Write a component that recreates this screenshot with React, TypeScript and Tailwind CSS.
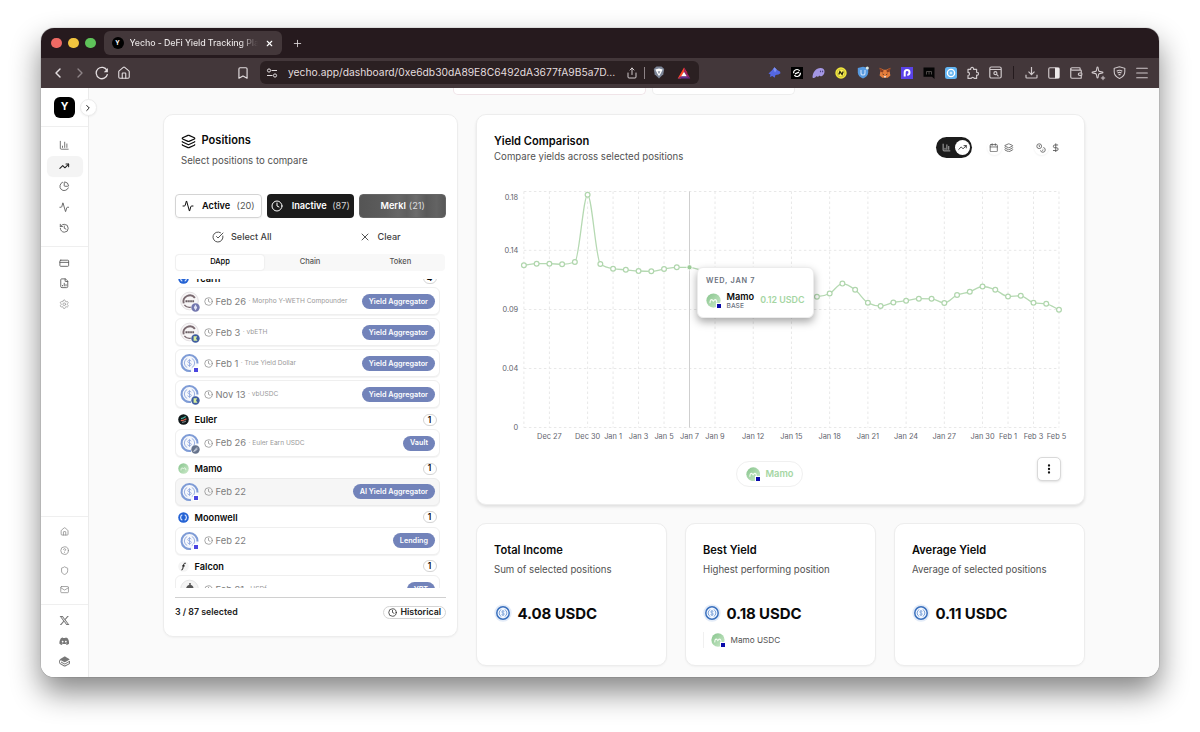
import type { ReactNode } from "react";
import {
  Activity,
  Bookmark,
  Calendar,
  ChartColumn,
  ChartPie,
  ChevronLeft,
  ChevronRight,
  CircleCheckBig,
  CircleQuestionMark,
  Clock,
  CreditCard,
  DollarSign,
  EllipsisVertical,
  FileChartColumn,
  History,
  House,
  Layers,
  Mail,
  Menu,
  PanelRight,
  Plus,
  Settings,
  Share,
  Shield,
  Sparkle,
  TrendingUp,
  Wallet,
  X,
} from "lucide-react";
import { FaDiscord, FaXTwitter } from "react-icons/fa6";
import { SiGitbook } from "react-icons/si";

/* ---------- token and protocol icons ---------- */

function UsdcRing({ size = 20 }: { size?: number }) {
  return (
    <svg width={size} height={size} viewBox="0 0 20 20" fill="none">
      <circle cx="10" cy="10" r="9.4" fill="#f6f8fc" />
      <path d="M11.5 18.3A8.4 8.4 0 1 1 18.4 10.5" stroke="#7f9cd6" strokeWidth="2.2" />
      <path
        d="M7.6 5.2a5.3 5.3 0 0 0 0 9.6M12.4 5.2a5.3 5.3 0 0 1 0 9.6"
        stroke="#94abdf"
        strokeWidth="1"
      />
      <path
        d="M11.8 8.2c-.2-.8-.9-1.1-1.8-1.1-1 0-1.8.5-1.8 1.4 0 2 3.7 1 3.7 3 0 .9-.8 1.4-1.9 1.4s-1.8-.5-2-1.3M10 6v8"
        stroke="#8fa7de"
        strokeWidth="0.9"
      />
    </svg>
  );
}

function UsdcCoin() {
  return (
    <svg width="18" height="18" viewBox="0 0 18 18" fill="none">
      <circle cx="9" cy="9" r="8.7" fill="#e4ecf8" />
      <circle cx="9" cy="9" r="6.2" fill="#f4f8ff" stroke="#3a70bd" strokeWidth="1.5" />
      <path
        d="M7.3 5.5a3.9 3.9 0 0 0 0 7M10.7 5.5a3.9 3.9 0 0 1 0 7"
        stroke="#6f98d4"
        strokeWidth="0.9"
      />
      <path
        d="M10.3 7.7c-.2-.6-.7-.8-1.3-.8-.8 0-1.3.4-1.3 1 0 1.5 2.7.7 2.7 2.2 0 .6-.6 1-1.4 1s-1.3-.3-1.4-.9M9 6v6"
        stroke="#6f98d4"
        strokeWidth="0.7"
      />
    </svg>
  );
}

function WethRing() {
  return (
    <svg width="20" height="20" viewBox="0 0 20 20" fill="none">
      <circle cx="10" cy="10" r="9.3" fill="#f7f5f6" stroke="#d6d2d4" strokeWidth="0.7" />
      <path d="M3.9 12.5a6.7 6.7 0 0 1 11.8-5.8" stroke="#7a6a70" strokeWidth="2" />
      <path d="M4.6 14a6.7 6.7 0 0 0 6.8 2.5" stroke="#7a6a70" strokeWidth="1.4" />
      <path d="M5.8 10.3h9" stroke="#5d5055" strokeWidth="2" strokeDasharray="1.5 0.5" />
    </svg>
  );
}

function MamoFace({ size = 15 }: { size?: number }) {
  return (
    <svg width={size} height={size} viewBox="0 0 16 16" fill="none">
      <defs>
        <linearGradient id="mamo" x1="0" y1="0" x2="1" y2="1">
          <stop offset="0" stopColor="#86c48c" />
          <stop offset="1" stopColor="#cdeacb" />
        </linearGradient>
      </defs>
      <circle cx="8" cy="8" r="7.6" fill="url(#mamo)" />
      <path
        d="M4.3 10.3c.1-2.4.8-3.3 1.6-3.3s1.3.9 1.9 1.7c.6-.8 1.100-1.700 2-1.700s1.500 1 1.600 2.800"
        stroke="#f4fbf3"
        strokeWidth="1.2"
        strokeLinecap="round"
      />
    </svg>
  );
}

function MamoBase({ size = 15 }: { size?: number }) {
  return (
    <span className="relative flex shrink-0">
      <MamoFace size={size} />
      <span className="absolute -right-[1px] -bottom-[1px] size-[6px] border border-white bg-[#0a0aaa]" />
    </span>
  );
}

function ProtocolIcon({ name }: { name: string }) {
  if (name === "Mamo") return <MamoFace size={11} />;
  if (name === "Euler")
    return (
      <svg width="11" height="11" viewBox="0 0 11 11" fill="none">
        <circle cx="5.5" cy="5.5" r="5.3" fill="#10181a" />
        <path d="M3 4.7c1.5-.2 3.5-1.3 4.7-2.2" stroke="#4fb7a3" strokeWidth="1.2" />
        <path d="M2.8 6.7c2 0 4-.9 5.6-2" stroke="#e2644f" strokeWidth="1.2" />
        <path d="M4 8.3c1.5 0 3-.6 4-1.3" stroke="#9ba7aa" strokeWidth="0.9" />
      </svg>
    );
  if (name === "Falcon")
    return (
      <svg width="11" height="11" viewBox="0 0 11 11" fill="none">
        <circle cx="5.5" cy="5.5" r="5.3" fill="#f4f4f4" />
        <path
          d="M7.8 2.3c-1.4-.5-1.9.3-2.2 1.7L4.7 8c-.2.8-.6 1-1.3.9M4 4.9h2.9"
          stroke="#222"
          strokeWidth="1"
        />
      </svg>
    );
  return (
    <svg width="11" height="11" viewBox="0 0 11 11" fill="none">
      <circle cx="5.5" cy="5.5" r="5.3" fill="#2563d4" />
      <path
        d="M4.3 2.8a3 3 0 0 0 0 5.4M6.7 2.8a3 3 0 0 1 0 5.4"
        stroke="#dbe8ff"
        strokeWidth="1.2"
      />
    </svg>
  );
}

type Chain = "base" | "eth" | "katana" | "euler" | "none";

function ChainBadge({ chain }: { chain: Chain }) {
  if (chain === "none") return null;
  if (chain === "base")
    return (
      <span className="absolute right-0 bottom-0 size-[6px] border-[0.5px] border-white bg-[#4a45e0]" />
    );
  return (
    <svg
      className="absolute -right-[1px] -bottom-[1px]"
      width="9"
      height="9"
      viewBox="0 0 9 9"
      fill="none"
    >
      <circle
        cx="4.5"
        cy="4.5"
        r="4.2"
        fill={chain === "eth" ? "#7377ae" : chain === "katana" ? "#3f5da0" : "#66738c"}
      />
      {chain === "eth" && <path d="m4.5 1.5 1.7 2.9L4.5 7.500 2.800 4.400Z" fill="#e1e3f7" />}
      {chain === "katana" && <path d="M2.6 2.2h3.600L5 4.500l1.500 2.300H2.600Z" fill="#d7ee9a" />}
      {chain === "euler" && <path d="m2.5 6.5 3.500-4M3.600 6.700l3-3" stroke="#d5dbe6" />}
    </svg>
  );
}

/* ---------- browser chrome ---------- */

function Slot({ children }: { children: ReactNode }) {
  return <span className="flex w-[22.1px] shrink-0 items-center justify-center">{children}</span>;
}

function Extensions() {
  return (
    <div className="flex items-center text-[#cfc8ca]">
      <Slot>
        <svg width="13" height="13" viewBox="0 0 13 13">
          <path
            d="M.5 7.5 4 4.3 6.5 1.2l2.3 2.5L12 5.5l.5 1.8-2 1.2-3 .4-.8 2.8L4.300 10l-2.500 1 .7-2.500Z"
            fill="#5467e2"
          />
          <path d="M6.5 1.2 8.800 3.700 7 6.500 5.300 3Z" fill="#7d90f0" />
        </svg>
      </Slot>
      <Slot>
        <svg width="12" height="12" viewBox="0 0 12 12" fill="none">
          <rect width="12" height="12" fill="#000" />
          <path
            d="M2.6 6.2A3.4 3.4 0 0 1 8.7 3.9M9.4 5.8A3.4 3.4 0 0 1 3.3 8.1"
            stroke="#fff"
            strokeWidth="1.2"
          />
          <path d="M4 6.9 8 5.1" stroke="#fff" strokeWidth="1.2" />
        </svg>
      </Slot>
      <Slot>
        <svg width="13" height="12" viewBox="0 0 13 12">
          <path
            d="M.5 10C.8 5 4 1 8.5 1c2.7 0 4 1.5 4 3.5 0 2.7-2 4.8-3.8 4.8-.7 0-1-.3-1.2-.8-.6.8-1.3 1.3-2 1.3-.6 0-.9-.3-1-.8C3.7 10.3 2.6 11 1.7 11 1 11 .5 10.7.5 10Z"
            fill="#a497e4"
          />
          <ellipse cx="8.5" cy="4.4" rx=".6" ry=".9" fill="#4b4185" />
          <ellipse cx="10.6" cy="4.4" rx=".6" ry=".9" fill="#4b4185" />
        </svg>
      </Slot>
      <Slot>
        <svg width="12" height="12" viewBox="0 0 12 12" fill="none">
          <circle cx="6" cy="6" r="5.7" fill="#f2e83b" />
          <circle cx="6" cy="6" r="3.9" fill="#fff35b" stroke="#9c9428" strokeWidth=".5" />
          <path d="M3.8 7.5 4.9 4.5l2.2 3 1.1-3" stroke="#26240c" strokeWidth="1.3" />
        </svg>
      </Slot>
      <Slot>
        <svg width="12" height="13" viewBox="0 0 12 13" fill="none">
          <path d="M.8 2 6 .8 11.2 2v4.5c0 3-2.5 4.9-5.2 6C3.3 11.4.8 9.5.8 6.5Z" fill="#579ae0" />
          <path d="M4 4v3a2 2 0 0 0 4 0V4" stroke="#c3dcf8" strokeWidth="1.2" />
          <circle cx="10.3" cy="2" r="1.5" fill="#dceae1" />
        </svg>
      </Slot>
      <Slot>
        <svg width="12" height="12" viewBox="0 0 12 12">
          <path
            d="m.6.7 4 2.1h2.8l4-2.1-.7 4 .7 3.8-2.7 2.3H3.3L.6 8.5l.7-3.8Z"
            fill="#e57e3c"
          />
          <path d="m.6.7 4 2.8-.6 2L1.3 4.7ZM11.4.7l-4 2.8.6 2 2.7-.8Z" fill="#8a3f22" />
          <path d="M3.3 6.5 5 7.3l-.8.7ZM8.7 6.5 7 7.3l.8.7Z" fill="#2d2320" />
          <path d="M4.8 9h2.4l-.3 1.5H5.1Z" fill="#e8dbd2" />
        </svg>
      </Slot>
      <Slot>
        <svg width="12" height="12" viewBox="0 0 12 12" fill="none">
          <rect width="12" height="12" fill="#5a43e8" />
          <path d="M3.7 9.6V5.5a2.4 2.4 0 1 1 2.6 2.4" stroke="#fff" strokeWidth="2" />
        </svg>
      </Slot>
      <Slot>
        <svg width="12" height="12" viewBox="0 0 12 12" fill="none">
          <path d="M.5.5h11V12L9 9.8H.5Z" fill="#050505" />
          <path d="M3.5 7.5v-3h5v3M6 4.5v3" stroke="#55504f" strokeWidth=".9" />
        </svg>
      </Slot>
      <Slot>
        <svg width="12" height="12" viewBox="0 0 12 12" fill="none">
          <rect width="12" height="12" rx="2.5" fill="#63b5f2" />
          <circle cx="6" cy="6" r="3.6" stroke="#fff" strokeWidth="1.4" />
          <path d="M6 4.6v2.8M4.6 6h2.8" stroke="#fff" strokeWidth=".9" />
        </svg>
      </Slot>
      <Slot>
        <svg
          width="14"
          height="14"
          viewBox="0 0 14 14"
          fill="none"
          stroke="currentColor"
          strokeWidth="1.2"
        >
          <path
            d="M2 3.3h2.7a1.5 1.5 0 1 1 2.9 0h3V6.3a1.5 1.5 0 1 1 0 2.9v3.2H8.2a1.5 1.5 0 0 0-2.9 0H2V9.5a1.5 1.5 0 0 0 0-3.1Z"
            strokeLinejoin="round"
          />
        </svg>
      </Slot>
      <Slot>
        <svg
          width="13"
          height="13"
          viewBox="0 0 13 13"
          fill="none"
          stroke="currentColor"
          strokeWidth="1.2"
        >
          <rect x=".8" y="1" width="11.4" height="11" rx="1.5" />
          <path d="M1 3.5h11M7.6 8.4l1.9 1.9" />
          <circle cx="6.4" cy="7.2" r="1.5" />
        </svg>
      </Slot>
      <span className="mx-[6.5px] h-[13px] w-px bg-[#241a1d]" />
      <Slot>
        <svg
          width="13"
          height="13"
          viewBox="0 0 13 13"
          fill="none"
          stroke="currentColor"
          strokeWidth="1.2"
        >
          <path d="M6.5 1v7.5M3.5 5.7l3 3 3-3M1 8.8v2.4c0 .5.3.8.8.8h9.4c.5 0 .8-.3.8-.8V8.8" />
        </svg>
      </Slot>
      <Slot>
        <span className="relative flex">
          <PanelRight size={14} strokeWidth={2} />
          <span className="absolute top-[2px] right-[1.5px] h-[10px] w-[4px] bg-[#eeeaea]" />
        </span>
      </Slot>
      <Slot>
        <Wallet size={14} strokeWidth={2} />
      </Slot>
      <Slot>
        <span className="relative flex">
          <Sparkle size={13} strokeWidth={2} />
          <Plus className="absolute -right-[2px] -bottom-[2px]" size={6} strokeWidth={4} />
        </span>
      </Slot>
      <Slot>
        <svg
          width="13"
          height="13"
          viewBox="0 0 13 13"
          fill="none"
          stroke="currentColor"
          strokeWidth="1.1"
        >
          <path d="M6.5.7 1.2 2.3v3.5c0 3.3 2.500 5.500 5.300 6.600 2.800-1.100 5.300-3.300 5.300-6.600V2.300Z" />
          <path d="M3.7 5.2c1.7-1.1 3.9-1.1 5.6 0M4.5 7c1.2-.8 2.8-.8 4 0M5.5 8.600h2" />
        </svg>
      </Slot>
      <Slot>
        <Menu size={16} strokeWidth={1.6} />
      </Slot>
    </div>
  );
}

function BrowserBar() {
  return (
    <header className="shrink-0 bg-[#261a1e] text-[#e3dddf]">
      <div className="flex h-[30px] items-center pl-[10px]">
        <div className="flex gap-[6.4px]">
          <span className="size-[10.6px] rounded-full bg-[#ee6a64]" />
          <span className="size-[10.6px] rounded-full bg-[#f1c43f]" />
          <span className="size-[10.6px] rounded-full bg-[#5fc35a]" />
        </div>
        <div className="ml-[8px] flex h-[24px] w-[178.5px] items-center rounded-[6px] bg-[#43373a] px-[8px]">
          <span className="flex size-[12px] shrink-0 items-center justify-center rounded-full bg-black text-[6px] font-bold text-white">
            Y
          </span>
          <span className="ml-[6px] h-[12px] w-[128px] overflow-hidden bg-gradient-to-r from-[#f2eeee] from-86% to-[#43373a] bg-clip-text text-[8.9px] leading-[12px] font-medium tracking-[-0.1px] whitespace-nowrap text-transparent">
            Yecho - DeFi Yield Tracking Platform
          </span>
          <X className="ml-auto text-white" size={9} strokeWidth={3} />
        </div>
        <Plus className="ml-[10px]" size={11} strokeWidth={1.8} />
      </div>

      <div className="flex h-[30px] items-center bg-[#43373a] pr-[6px] pb-px pl-[9px]">
        <ChevronLeft size={16} strokeWidth={2.2} />
        <ChevronRight className="ml-[6px] text-[#8f8588]" size={16} strokeWidth={2} />
        <svg className="ml-[7px]" width="14" height="14" viewBox="0 0 14 14" fill="none">
          <path d="M12 4.4A5.7 5.7 0 1 0 12.5 8.2" stroke="currentColor" strokeWidth="1.3" />
          <path d="M12.9 2v4.2H8.8Z" fill="currentColor" />
        </svg>
        <House className="ml-[8px]" size={14} strokeWidth={1.9} />
        <Bookmark className="ml-[105px]" size={14} strokeWidth={2} />
        <div className="ml-[10px] flex h-[23px] w-[438.500px] items-center rounded-[6px] bg-[#2b2022] pr-[8px] pl-[6px]">
          <svg
            width="12"
            height="12"
            viewBox="0 0 12 12"
            fill="none"
            stroke="currentColor"
            strokeWidth="1"
          >
            <circle cx="3" cy="3.5" r="1.6" />
            <path d="M5.5 3.5H11M1 8.5h5.5" />
            <circle cx="9" cy="8.5" r="1.6" />
          </svg>
          <span className="ml-[10px] w-[330px] text-[10.29px] whitespace-nowrap">
            yecho.app/dashboard/0xe6db30dA89E8C6492dA3677fA9B5a7D...
          </span>
          <span className="ml-auto flex items-center">
            <Share size={12} strokeWidth={1.8} />
            <span className="ml-[6px] h-[12px] w-px bg-[#8d8386]" />
            <svg className="ml-[8px]" width="12" height="13" viewBox="0 0 12 13">
              <path d="M3.5.6h5L11.2 3l-.9 5.3L6 12.4 1.7 8.3.8 3Z" fill="#7c8597" />
              <path d="m2.3 3.6 3.7-1 3.7 1-2 4L6 10 4.3 7.6Z" fill="#fff" />
              <path d="m4.6 5 1.400.6L7.400 5 6 8.300Z" fill="#7c8597" />
            </svg>
            <svg className="ml-[12px]" width="14" height="12" viewBox="0 0 14 12">
              <path d="M7 .6 10.5 6 7 4.8 4 11.5H.7Z" fill="#ff4724" />
              <path d="M7 .6 13.3 11.5 9.8 9.3 7 4.8Z" fill="#9e1f63" />
              <path d="M.7 11.5 4.2 9.3h5.6l3.5 2.2Z" fill="#662d91" />
              <path d="M7 4.8 9.8 9.3H4.2Z" fill="#fff" />
            </svg>
          </span>
        </div>
        <div className="ml-auto">
          <Extensions />
        </div>
      </div>
    </header>
  );
}

/* ---------- app sidebar ---------- */

function NavItem({ children, active }: { children: ReactNode; active?: boolean }) {
  return (
    <a
      className={
        active
          ? "flex h-[20.7px] w-[36px] items-center justify-center rounded-[6px] bg-[#f4f4f4] text-[#222] shadow-[0_1px_1px_rgba(0,0,0,0.05)]"
          : "flex h-[20.7px] w-[36px] items-center justify-center text-[#5a5a5a]"
      }
    >
      {children}
    </a>
  );
}

function Sidebar() {
  return (
    <aside className="relative flex w-[48px] shrink-0 flex-col border-r border-[#ebebeb] bg-white">
      <div className="flex h-[39px] items-center justify-center border-b border-[#efefef]">
        <span className="flex size-[21px] items-center justify-center rounded-[6px] bg-black text-[10.5px] font-bold text-white">
          Y
        </span>
      </div>
      <span className="absolute top-[11px] -right-[8.5px] flex size-[17px] items-center justify-center rounded-full border border-[#ececec] bg-white shadow-xs">
        <ChevronRight size={10} strokeWidth={2.2} />
      </span>

      <nav className="flex flex-col items-center pt-[8px] pb-[8px]">
        <NavItem>
          <ChartColumn size={10.5} strokeWidth={1.9} />
        </NavItem>
        <NavItem active>
          <TrendingUp size={10.5} strokeWidth={2.4} />
        </NavItem>
        <NavItem>
          <ChartPie size={10.5} strokeWidth={2} />
        </NavItem>
        <NavItem>
          <Activity size={10.5} strokeWidth={2} />
        </NavItem>
        <NavItem>
          <History size={10.5} strokeWidth={2} />
        </NavItem>
      </nav>
      <nav className="flex flex-col items-center border-t border-[#efefef] pt-[5px]">
        <NavItem>
          <CreditCard size={10.5} strokeWidth={2} />
        </NavItem>
        <NavItem>
          <FileChartColumn size={10.5} strokeWidth={2} />
        </NavItem>
        <NavItem>
          <Settings className="text-[#a3a3a3]" size={10.5} strokeWidth={2} />
        </NavItem>
      </nav>

      <nav className="mt-auto flex flex-col items-center gap-[10px] border-t border-[#efefef] pt-[10.500px] pb-[10.500px] text-[#8a8a8a]">
        <House size={9.2} strokeWidth={2} />
        <CircleQuestionMark size={9.2} strokeWidth={2} />
        <Shield size={9.2} strokeWidth={2} />
        <Mail size={9.2} strokeWidth={2} />
      </nav>
      <nav className="flex flex-col items-center gap-[9.8px] border-t border-[#efefef] pt-[9.5px] pb-[10px] text-[#777]">
        <FaXTwitter size={11} />
        <FaDiscord size={10.5} />
        <SiGitbook size={11} />
      </nav>
    </aside>
  );
}

/* ---------- positions ---------- */

type Position = {
  date: string;
  name?: string;
  tag: string;
  token: "weth" | "usdc" | "other";
  chain: Chain;
  selected?: boolean;
};

const groups: { name: string; count: number; items: Position[] }[] = [
  {
    name: "Yearn",
    count: 4,
    items: [
      { date: "Feb 26", name: "Morpho Y-WETH Compounder", tag: "Yield Aggregator", token: "weth", chain: "eth" },
      { date: "Feb 3", name: "vbETH", tag: "Yield Aggregator", token: "weth", chain: "katana" },
      { date: "Feb 1", name: "True Yield Dollar", tag: "Yield Aggregator", token: "usdc", chain: "base" },
      { date: "Nov 13", name: "vbUSDC", tag: "Yield Aggregator", token: "usdc", chain: "katana" },
    ],
  },
  {
    name: "Euler",
    count: 1,
    items: [{ date: "Feb 26", name: "Euler Earn USDC", tag: "Vault", token: "usdc", chain: "euler" }],
  },
  {
    name: "Mamo",
    count: 1,
    items: [{ date: "Feb 22", tag: "AI Yield Aggregator", token: "usdc", chain: "base", selected: true }],
  },
  {
    name: "Moonwell",
    count: 1,
    items: [{ date: "Feb 22", tag: "Lending", token: "usdc", chain: "base" }],
  },
  {
    name: "Falcon",
    count: 1,
    items: [{ date: "Feb 21", name: "USDf", tag: "YBT", token: "other", chain: "none" }],
  },
];

function PositionRow({ item }: { item: Position }) {
  return (
    <div
      className={
        item.selected
          ? "flex h-[28px] items-center rounded-[6px] border border-[#ebebeb] bg-[#f6f6f6] pr-[4.5px] pl-[3.5px] shadow-[0_1px_1px_rgba(0,0,0,0.05)]"
          : "flex h-[28px] items-center rounded-[6px] border border-[#efefef] bg-white pr-[4.5px] pl-[3.5px] shadow-[0_1px_1px_rgba(0,0,0,0.05)]"
      }
    >
      <span className="relative flex size-[19px] shrink-0 items-center justify-center">
        {item.token === "weth" && <WethRing />}
        {item.token === "usdc" && <UsdcRing />}
        {item.token === "other" && (
          <svg width="20" height="20" viewBox="0 0 20 20">
            <circle cx="10" cy="10" r="9.3" fill="#f4f4f4" stroke="#e3e3e3" />
            <path d="M9.7 3.8h1.600v2c2 .4 3 1.800 3 4.200H6.400c0-2.300 1.300-3.800 3.300-4.200Z" fill="#555" />
          </svg>
        )}
        <ChainBadge chain={item.chain} />
      </span>
      <Clock className="ml-[5px] shrink-0 text-[#8a8a8a]" size={9} strokeWidth={2} />
      <span className="ml-[3px] text-[9.4px] whitespace-nowrap text-[#7d7d7d]">{item.date}</span>
      {item.name && (
        <span className="ml-[2.5px] text-[6.6px] whitespace-nowrap text-[#9a9a9a]">· {item.name}</span>
      )}
      <span className="ml-auto flex h-[15px] items-center rounded-full bg-[#7283ba] px-[6.5px] text-[7.25px] font-semibold whitespace-nowrap text-white">
        {item.tag}
      </span>
    </div>
  );
}

function Positions() {
  return (
    <section className="flex h-[523px] w-[295px] shrink-0 flex-col rounded-[10px] border border-[#ededed] bg-white px-[11px] pt-[18px] shadow-[0_1px_2px_rgba(0,0,0,0.04)]">
      <div className="flex h-[16px] items-center pl-[5.5px] text-[11.1px] font-semibold">
        <Layers size={15} strokeWidth={1.9} />
        <h2 className="ml-[6px]">Positions</h2>
      </div>
      <p className="mt-[4px] h-[15px] pl-[6px] text-[9.64px] leading-[15px] text-[#525252]">
        Select positions to compare
      </p>

      <div className="mt-[26px] grid h-[24px] grid-cols-3 gap-[5.5px] text-[9.2px]">
        <button className="flex items-center rounded-[4px] border border-[#d4d4d4] px-[6px] shadow-xs">
          <Activity size={12} strokeWidth={2} />
          <span className="ml-[8px] font-semibold">Active</span>
          <span className="ml-auto text-[#555]">(20)</span>
        </button>
        <button className="flex items-center rounded-[4px] bg-[#1c1c1c] px-[4px] text-white">
          <Clock size={12} strokeWidth={2} />
          <span className="ml-[8.5px] font-semibold">Inactive</span>
          <span className="ml-auto text-[#d5d5d5]">(87)</span>
        </button>
        <button className="flex items-center justify-center gap-[3px] rounded-[4px] border border-[#666] bg-[linear-gradient(90deg,#555,#5c5c5c_30%,#666_45%,#5e5e5e_55%,#6c6c6c_66%,#5a5a5a_78%,#636363_90%,#585858)] text-white">
          <span className="font-semibold">Merkl</span>
          <span className="text-[#dedede]">(21)</span>
        </button>
      </div>

      <div className="mt-[8px] flex h-[22px] items-center pl-[37px] text-[9.1px] font-medium text-[#404040]">
        <CircleCheckBig size={12} strokeWidth={1.8} />
        <span className="ml-[7px] w-[40px] whitespace-nowrap">Select All</span>
        <X className="ml-[87.5px]" size={12} strokeWidth={1.8} />
        <span className="ml-[7px]">Clear</span>
      </div>

      <div className="mt-[5.500px] grid h-[17px] w-[270px] grid-cols-3 items-center rounded-[4px] bg-[#f8f8f8] p-[1px] text-center text-[7.5px] font-medium text-[#555]">
        <span className="flex h-[15px] w-[88px] items-center justify-center rounded-[3px] bg-white text-black shadow-[0_0_2px_rgba(0,0,0,0.12)]">
          DApp
        </span>
        <span>Chain</span>
        <span className="pl-[2px]">Token</span>
      </div>

      <div className="mt-[8px] h-[309px] w-[265px] overflow-hidden">
        <div className="-mt-[12px]">
          {groups.map((group) => (
            <div key={group.name}>
              <div className="flex h-[20.75px] items-center pt-[2.5px] pr-[3.5px] pl-[3px]">
                <ProtocolIcon name={group.name} />
                <span className="ml-[5.5px] text-[9.2px] font-semibold">{group.name}</span>
                <span className="ml-auto flex h-[12px] w-[14px] items-center justify-center rounded-full border border-[#d4d4d4] text-[8.3px] font-semibold">
                  {group.count}
                </span>
              </div>
              <div className="flex flex-col gap-[3px]">
                {group.items.map((item) => (
                  <PositionRow key={item.date + item.name} item={item} />
                ))}
              </div>
            </div>
          ))}
        </div>
      </div>

      <div className="mt-[9px] flex items-center justify-between border-t border-[#d0d0d0] pt-[8px] text-[8.8px] font-semibold text-[#222]">
        <span>3 / 87 selected</span>
        <span className="flex h-[13px] items-center gap-[3px] rounded-full border border-[#d4d4d4] px-[4px]">
          <Clock size={9} strokeWidth={2} />
          Historical
        </span>
      </div>
    </section>
  );
}

/* ---------- yield chart ---------- */

// chart geometry, one point per day from Dec 25 to Feb 5
const STEP = 12.74;
const LEFT = 29.9;
const values = [
  265.3, 263.7, 263.7, 264.3, 262, 194.8, 264, 268.7, 269.8, 271, 271.3, 269, 267.3, 267.3, 270.5, 273, 276,
  280, 285, 290, 294, 296, 297, 296.7, 293.5, 283.6, 289.8, 302.8, 306, 302.5, 300.7, 298.7, 298.8,
  303, 295, 291.8, 286.5, 289.8, 296.5, 295.8, 302.8, 303.8, 309.8,
];
const points = values.map((v, i) => ({ x: LEFT + i * STEP, y: v - 180 }));

const ticks: [number, string][] = [
  [2, "Dec 27"],
  [5, "Dec 30"],
  [7, "Jan 1"],
  [9, "Jan 3"],
  [11, "Jan 5"],
  [13, "Jan 7"],
  [15, "Jan 9"],
  [18, "Jan 12"],
  [21, "Jan 15"],
  [24, "Jan 18"],
  [27, "Jan 21"],
  [30, "Jan 24"],
  [33, "Jan 27"],
  [36, "Jan 30"],
  [38, "Feb 1"],
  [40, "Feb 3"],
  [42, "Feb 5"],
];

// grid line, label position, label
const rows: [number, number, string][] = [
  [11.5, 17, "0.18"],
  [70.3, 70.3, "0.14"],
  [129.5, 129.5, "0.09"],
  [188.5, 188.5, "0.04"],
  [247.5, 247.5, "0"],
];

function monotonePath() {
  const slopes = points.slice(1).map((p, i) => (p.y - points[i].y) / STEP);
  const tangents = points.map((_, i) => {
    if (i === 0) return slopes[0];
    if (i === points.length - 1) return slopes[i - 1];
    const a = slopes[i - 1];
    const b = slopes[i];
    if (a * b <= 0) return 0;
    return Math.sign(a) * Math.min(Math.abs(a), Math.abs(b), Math.abs(a + b) / 4) * 2;
  });
  let d = `M${points[0].x},${points[0].y}`;
  for (let i = 1; i < points.length; i++) {
    const p = points[i - 1];
    const q = points[i];
    const h = STEP / 3;
    d += `C${p.x + h},${p.y + tangents[i - 1] * h} ${q.x - h},${q.y - tangents[i] * h} ${q.x},${q.y}`;
  }
  return d;
}

function Chart() {
  return (
    <svg className="block" width="590" height="265" viewBox="0 0 590 265" fill="none">
      <g stroke="#e8e8e8" strokeDasharray="2.5 2.5">
        {rows.map(([y]) => (
          <path key={y} d={`M${LEFT} ${y}H${LEFT + STEP * 42}`} />
        ))}
        {[[0, ""] as [number, string], ...ticks].map(([i]) => (
          <path key={i} d={`M${LEFT + STEP * i} 11.5V247.5`} />
        ))}
      </g>
      <path d={`M${LEFT + STEP * 13} 11.5V247.5`} stroke="#cfcfcf" />
      <path d={monotonePath()} stroke="#b5d9b2" strokeWidth="1.3" />
      {points.map((p, i) =>
        i === 13 ? (
          <circle key={i} cx={p.x} cy={p.y} r="2.6" fill="#9ccb98" stroke="#fff" strokeWidth="0.9" />
        ) : i === 14 ? null : (
          <circle key={i} cx={p.x} cy={p.y} r="2.4" fill="#fff" stroke="#b0d6ad" strokeWidth="1.2" />
        ),
      )}
      <g fill="#5f646e" fontSize="7.4">
        {rows.map(([y, ty, label]) => (
          <text key={y} x="24.2" y={ty + 2.6} textAnchor="end">
            {label}
          </text>
        ))}
        {ticks.map(([i, label]) => (
          <text key={i} x={i === 42 ? 562.5 : LEFT + STEP * i} y="259" textAnchor="middle">
            {label}
          </text>
        ))}
      </g>
    </svg>
  );
}

function YieldComparison() {
  return (
    <section className="h-[391px] rounded-[10px] border border-[#ededed] bg-white pt-[18px] pr-[17px] pl-[16.5px] shadow-[0_2px_3px_rgba(0,0,0,0.1)]">
      <div className="flex h-[47px] justify-between">
        <div className="pl-[0.6px]">
          <h2 className="h-[16px] text-[11.1px] leading-[16px] font-semibold">Yield Comparison</h2>
          <p className="h-[15px] text-[9.64px] leading-[15px] text-[#525252]">
            Compare yields across selected positions
          </p>
        </div>
        <div className="mt-[4px] flex h-[21px] items-center text-[#555]">
          <span className="flex h-[21px] w-[36px] items-center rounded-full bg-[#1c1c1c] pl-[6px]">
            <ChartColumn className="text-[#ddd]" size={9} strokeWidth={2} />
            <span className="ml-[4px] flex size-[15px] items-center justify-center rounded-full bg-white text-[#222]">
              <TrendingUp size={9} strokeWidth={2.2} />
            </span>
          </span>
          <span className="ml-[14.5px] flex size-[15px] items-center justify-center rounded-full shadow-[0_1px_2px_rgba(0,0,0,0.06)]">
            <Calendar size={9.5} strokeWidth={2} />
          </span>
          <Layers className="ml-[2.5px]" size={9.5} strokeWidth={2} />
          <span className="ml-[20px] flex size-[15px] items-center justify-center rounded-full shadow-[0_1px_2px_rgba(0,0,0,0.06)]">
            <svg
              width="10"
              height="10"
              viewBox="0 0 10 10"
              fill="none"
              stroke="currentColor"
              strokeWidth="0.8"
            >
              <circle cx="3.2" cy="3.2" r="2.4" />
              <path d="M7.3 4.5A2.4 2.4 0 1 1 4.5 7.3M2.8 2.5h.6v1.6M6.600 6.300l.6.500-.9.900" />
            </svg>
          </span>
          <DollarSign className="mr-[6.5px] ml-[2.5px]" size={9.5} strokeWidth={2.2} />
        </div>
      </div>

      <div className="relative -mr-[17px]">
        <Chart />
        <div className="absolute top-[86.5px] left-[203px] h-[51px] w-[117px] rounded-[6px] border border-[#ececec] bg-white px-[8.5px] pt-[8px] shadow-[0_4px_9px_rgba(0,0,0,0.34)]">
          <div className="text-[7.3px] leading-[10px] font-semibold tracking-[0.75px] text-[#6b7280]">
            WED, JAN 7
          </div>
          <div className="mt-[6px] flex items-center">
            <MamoBase size={15} />
            <span className="ml-[5.5px] flex flex-col">
              <span className="text-[9.2px] leading-[10px] font-semibold">Mamo</span>
              <span className="text-[6.7px] leading-[8px] font-medium text-[#6b7280]">BASE</span>
            </span>
            <span className="ml-[6px] text-[8.9px] font-semibold whitespace-nowrap text-[#a5d6a3]">
              0.12 USDC
            </span>
          </div>
        </div>
      </div>

      <div className="mt-[12px] flex h-[30px] items-start">
        <span className="mt-[4px] ml-[242px] flex h-[26px] w-[67px] items-center rounded-full border border-[#f0f0f0] pl-[9px]">
          <MamoBase size={14.5} />
          <span className="ml-[5.5px] text-[9.3px] font-semibold text-[#a5d6a3]">Mamo</span>
        </span>
        <button className="mr-[6.5px] ml-auto flex h-[24px] w-[24px] items-center justify-center rounded-[5px] border border-[#d9d9d9] bg-white shadow-sm">
          <EllipsisVertical size={12} strokeWidth={2.6} />
        </button>
      </div>
    </section>
  );
}

/* ---------- stat cards ---------- */

function StatCard({
  title,
  text,
  value,
  children,
}: {
  title: string;
  text: string;
  value: string;
  children?: ReactNode;
}) {
  return (
    <section className="h-[143px] rounded-[10px] border border-[#ededed] bg-white px-[17px] pt-[18px] shadow-[0_1px_2px_rgba(0,0,0,0.04)]">
      <h3 className="h-[16px] text-[11.1px] leading-[16px] font-semibold">{title}</h3>
      <p className="mt-[4px] h-[15px] text-[9.64px] leading-[15px] text-[#525252]">{text}</p>
      <div className="mt-[26px] flex h-[20px] items-center">
        <UsdcCoin />
        <span className="ml-[5.5px] text-[15px] font-bold tracking-[-0.1px]">{value}</span>
      </div>
      {children}
    </section>
  );
}

export default function App() {
  return (
    <div className="flex h-[732px] w-[1200px] overflow-hidden bg-white pt-[28px] pl-[41px] font-['Inter',sans-serif] leading-none text-[#0a0a0a]">
      <div className="flex h-[649px] w-[1118px] flex-col overflow-hidden rounded-[13px] shadow-[0_0_1px_rgba(0,0,0,0.7),0_15px_30px_rgba(0,0,0,0.48)]">
        <BrowserBar />

        <div className="flex h-[589px] bg-[#fafafa]">
          <Sidebar />

          <main className="flex-1 pl-[74px]">
            <div className="flex h-[7px] gap-[6px] pl-[290px]">
              <span className="w-[193px] rounded-b-[5px] border border-t-0 border-[#f0e4e8] bg-white" />
              <span className="w-[143px] rounded-b-[5px] border border-t-0 border-[#ededed] bg-white" />
            </div>

            <div className="mt-[19px] flex gap-[18px]">
              <Positions />

              <div className="w-[609px]">
                <YieldComparison />

                <div className="mt-[18px] grid grid-cols-3 gap-[18px]">
                  <StatCard title="Total Income" text="Sum of selected positions" value="4.08 USDC" />
                  <StatCard title="Best Yield" text="Highest performing position" value="0.18 USDC">
                    <div className="mt-[9px] flex h-[16px] items-center border-l border-[#f0f0f0] pl-[6.5px] text-[8.2px] text-[#525252]">
                      <MamoBase size={14} />
                      <span className="ml-[6px]">Mamo USDC</span>
                    </div>
                  </StatCard>
                  <StatCard title="Average Yield" text="Average of selected positions" value="0.11 USDC" />
                </div>
              </div>
            </div>
          </main>
        </div>
      </div>
    </div>
  );
}
